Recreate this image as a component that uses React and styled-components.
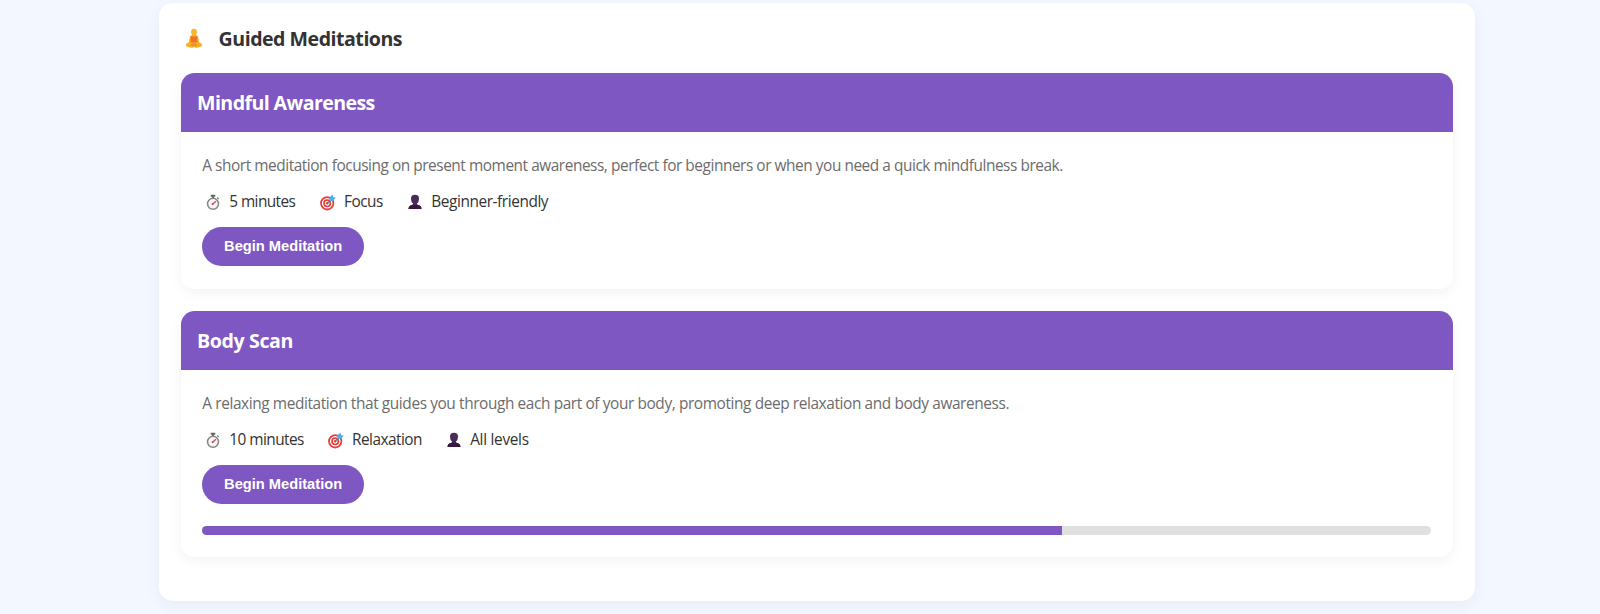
import React from "react";
import styled, { createGlobalStyle } from "styled-components";

const Global = createGlobalStyle`
  * { box-sizing: border-box; }
  html, body { margin: 0; padding: 0; }
  body {
    background: #f3f7ff;
    color: #333;
    font-family: "Segoe UI", "Open Sans", "Noto Sans", sans-serif;
    font-size: 15.4px;
    overflow: hidden;
  }
`;

const Page = styled.main`
  height: 614px;
  padding: 2.7px 125px 0 158.6px;
`;

const Panel = styled.section`
  height: 598.3px;
  padding: 22px;
  background: #fff;
  border-radius: 14px;
  box-shadow: 0 4px 16px rgba(0, 0, 0, 0.05);
`;

const PanelTitle = styled.h2`
  display: flex;
  align-items: center;
  height: 28px;
  margin: 0 0 20px;
  font-size: 19.6px;
  font-weight: 700;
  line-height: 28px;
  letter-spacing: ${(p) => p.$spacing};
`;

const TitleIcon = styled.span`
  display: flex;
  justify-content: center;
  width: 27px;
  margin-right: 11px;
`;

const Card = styled.article`
  height: ${(p) => p.$height};
  margin-bottom: 22px;
  background: #fff;
  border-radius: 13.5px;
  overflow: hidden;
  box-shadow: 0 4px 13px rgba(0, 0, 0, 0.05);
`;

const CardHeader = styled.header`
  height: 59.6px;
  padding: 16.6px 16.5px 0;
  background: #7e57c2;
  color: #fff;
`;

const CardTitle = styled.h3`
  margin: 0;
  font-size: 19.6px;
  font-weight: 700;
  line-height: 28px;
  letter-spacing: ${(p) => p.$spacing};
`;

const CardBody = styled.div`
  padding: 22px 22px 22px 21.7px;
`;

const Description = styled.p`
  margin: 0;
  color: #6c6c6c;
  line-height: 24px;
  white-space: nowrap;
  letter-spacing: ${(p) => p.$spacing};
`;

const MetaRow = styled.ul`
  display: flex;
  gap: 22px;
  margin: 12px 0 13px;
  padding: 0;
  list-style: none;
`;

const MetaItem = styled.li`
  display: flex;
  align-items: center;
  width: ${(p) => p.$width};
  height: 24px;
  line-height: 24px;
  white-space: nowrap;
  letter-spacing: ${(p) => p.$spacing};
`;

const MetaIcon = styled.span`
  display: flex;
  flex: none;
  justify-content: center;
  width: 22px;
  margin-right: 5px;
`;

const BeginButton = styled.button`
  display: block;
  width: 161.6px;
  height: 39px;
  padding: 0;
  border: 0;
  border-radius: 20px;
  background: #7e57c2;
  color: #fff;
  font: 700 14.667px/17px "Liberation Sans", Arial, sans-serif;
  cursor: pointer;
`;

const Track = styled.div`
  height: 9px;
  margin-top: 22px;
  border-radius: 4.5px;
  background: #e0e0e0;
  overflow: hidden;
`;

const Fill = styled.div`
  width: ${(p) => p.$percent}%;
  height: 100%;
  background: #7e57c2;
`;

const LotusIcon = () => (
  <svg width="18" height="21" viewBox="0 0 18 21">
    <path d="M6.3 7.2Q9 6 11.7 7.2Q13.8 8.6 14 14L17 16Q17.8 17.6 16.2 18.6L11 20L9 19L7 20L1.8 18.6Q.2 17.6 1 16L4 14Q4.2 8.6 6.3 7.2Z" fill="#fbb022" />
    <path d="M5.6 8Q9 9 12.4 8L12.2 14.5H5.8Z" fill="#f4702a" />
    <ellipse cx="9" cy="4" rx="2.9" ry="3.3" fill="#fbb52a" />
    <path d="M4.5 17Q9 14.5 13.5 17L9 18.5Z" fill="#e8941c" />
    <path d="M7.6 14.8H10.4V16.6H7.6Z" fill="#b9a08c" />
  </svg>
);

const StopwatchIcon = () => (
  <svg width="14" height="17" viewBox="0 0 14 17">
    <path d="M4.7 .7H9.3V2.8H8V4H6V2.8H4.7Z" fill="#666" />
    <path d="M11.2 3.5L12.7 5" stroke="#777" strokeWidth="1.3" />
    <circle cx="7" cy="9.8" r="5.5" fill="#f7f7f7" stroke="#858585" strokeWidth="1.5" />
    <path d="M6.2 10.6L10 7.2" stroke="#e5484d" strokeWidth="1.3" />
    <circle cx="6.6" cy="10.2" r=".9" fill="#b04a50" />
  </svg>
);

const TargetIcon = () => (
  <svg width="16" height="17" viewBox="0 0 16 17">
    <circle cx="7.2" cy="9.3" r="6.2" fill="#fff" stroke="#e5403c" strokeWidth="1.8" />
    <circle cx="7.2" cy="9.3" r="3.2" fill="#fff" stroke="#e5403c" strokeWidth="1.7" />
    <circle cx="7.2" cy="9.3" r="1.2" fill="#e5403c" />
    <path d="M7.2 9.3L11.3 5.2" stroke="#4a6f98" strokeWidth="1.2" />
    <path d="M9.3 7L9.5 3.3L12.5 .5L13.1 3.1L15.8 3.7L12.9 6.8Z" fill="#50aeea" />
  </svg>
);

const PersonIcon = () => (
  <svg width="14" height="16" viewBox="0 0 14 16">
    <path d="M3 4.8Q2.8 .7 7 .7T11 4.8Q11 8 9 9.5V10.5L12 11.7Q13.5 12.4 13.5 15H.5Q.5 12.4 2 11.7L5 10.5V9.5Q3 8 3 4.8Z" fill="#4a2a59" />
    <path d="M2 11.7L5 10.5Q7 12 9 10.5L12 11.7Q13.5 12.4 13.5 15H.5Q.5 12.4 2 11.7Z" fill="#35193f" />
  </svg>
);

const icons = { time: StopwatchIcon, goal: TargetIcon, level: PersonIcon };

const meditations = [
  {
    title: "Mindful Awareness",
    titleSpacing: "-0.6px",
    text: "A short meditation focusing on present moment awareness, perfect for beginners or when you need a quick mindfulness break.",
    textSpacing: "-0.445px",
    height: "216px",
    meta: [
      { icon: "time", label: "5 minutes", width: "92.7px", spacing: "-0.58px" },
      { icon: "goal", label: "Focus", width: "65.3px", spacing: "-0.5px" },
      { icon: "level", label: "Beginner-friendly", width: "150px", spacing: "-0.42px" },
    ],
  },
  {
    title: "Body Scan",
    titleSpacing: "-0.4px",
    text: "A relaxing meditation that guides you through each part of your body, promoting deep relaxation and body awareness.",
    textSpacing: "-0.39px",
    height: "246.5px",
    progress: 70,
    meta: [
      { icon: "time", label: "10 minutes", width: "100.7px", spacing: "-0.55px" },
      { icon: "goal", label: "Relaxation", width: "96.2px", spacing: "-0.52px" },
      { icon: "level", label: "All levels", width: "100px", spacing: "-0.3px" },
    ],
  },
];

function MeditationCard({ item }) {
  return (
    <Card $height={item.height}>
      <CardHeader>
        <CardTitle $spacing={item.titleSpacing}>{item.title}</CardTitle>
      </CardHeader>
      <CardBody>
        <Description $spacing={item.textSpacing}>{item.text}</Description>
        <MetaRow>
          {item.meta.map((m) => {
            const Icon = icons[m.icon];
            return (
              <MetaItem key={m.label} $width={m.width} $spacing={m.spacing}>
                <MetaIcon><Icon /></MetaIcon>
                {m.label}
              </MetaItem>
            );
          })}
        </MetaRow>
        <BeginButton>Begin Meditation</BeginButton>
        {item.progress && (
          <Track>
            <Fill $percent={item.progress} />
          </Track>
        )}
      </CardBody>
    </Card>
  );
}

export default function App() {
  return (
    <>
      <Global />
      <Page>
        <Panel>
          <PanelTitle $spacing="-0.5px">
            <TitleIcon><LotusIcon /></TitleIcon>
            Guided Meditations
          </PanelTitle>
          {meditations.map((item) => (
            <MeditationCard key={item.title} item={item} />
          ))}
        </Panel>
      </Page>
    </>
  );
}
